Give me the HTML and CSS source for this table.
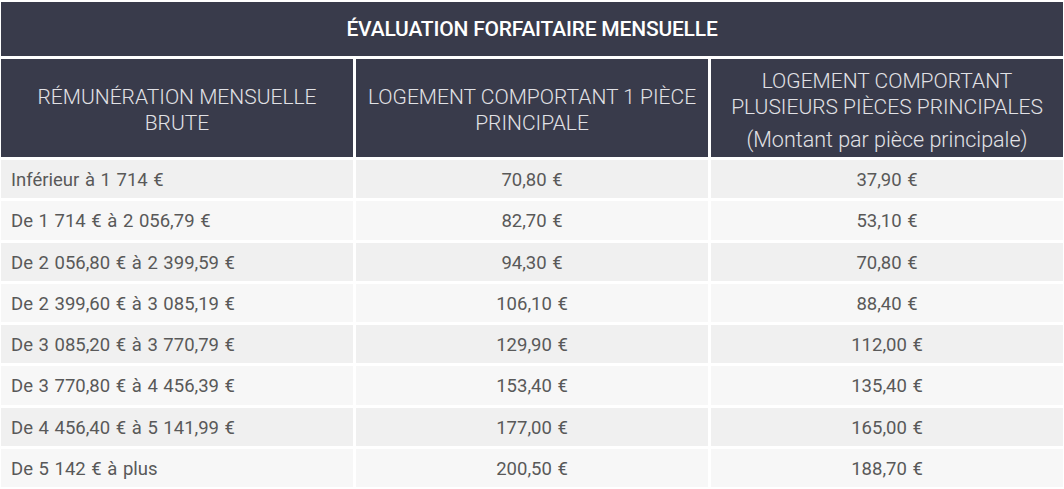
FILE: index.html
```html
<!DOCTYPE html>
<html lang="fr">
<head>
<meta charset="utf-8">
<title>Évaluation forfaitaire mensuelle</title>
<link rel="stylesheet" href="styles.css">
</head>
<body>
<div class="table">
  <div class="title">ÉVALUATION FORFAITAIRE MENSUELLE</div>
  <div class="head">RÉMUNÉRATION MENSUELLE<br>BRUTE</div>
  <div class="head">LOGEMENT COMPORTANT 1 PIÈCE<br>PRINCIPALE</div>
  <div class="head head-3">
    <span>LOGEMENT COMPORTANT<br>PLUSIEURS PIÈCES PRINCIPALES</span>
    <span class="note">(Montant par pièce principale)</span>
  </div>

  <div class="cell c1 odd">Inférieur à 1 714 €</div>
  <div class="cell odd">70,80 €</div>
  <div class="cell odd">37,90 €</div>

  <div class="cell c1 even">De 1 714 € à 2 056,79 €</div>
  <div class="cell even">82,70 €</div>
  <div class="cell even">53,10 €</div>

  <div class="cell c1 odd">De 2 056,80 € à 2 399,59 €</div>
  <div class="cell odd">94,30 €</div>
  <div class="cell odd">70,80 €</div>

  <div class="cell c1 even">De 2 399,60 € à 3 085,19 €</div>
  <div class="cell even">106,10 €</div>
  <div class="cell even">88,40 €</div>

  <div class="cell c1 odd">De 3 085,20 € à 3 770,79 €</div>
  <div class="cell odd">129,90 €</div>
  <div class="cell odd">112,00 €</div>

  <div class="cell c1 even">De 3 770,80 € à 4 456,39 €</div>
  <div class="cell even">153,40 €</div>
  <div class="cell even">135,40 €</div>

  <div class="cell c1 odd">De 4 456,40 € à 5 141,99 €</div>
  <div class="cell odd">177,00 €</div>
  <div class="cell odd">165,00 €</div>

  <div class="cell c1 even">De 5 142 € à plus</div>
  <div class="cell even">200,50 €</div>
  <div class="cell even">188,70 €</div>
</div>
</body>
</html>
```

FILE: styles.css
```css
html, body {
  margin: 0;
  padding: 0;
  background: #ffffff;
}

body {
  font-family: Roboto, "Liberation Sans", sans-serif;
}

.table {
  width: 1064px;
  box-sizing: border-box;
  padding: 2px 1px 2px 1px;
  display: grid;
  grid-template-columns: 352px 352px 352px;
  grid-template-rows: 54px 98px repeat(8, 38.25px);
  column-gap: 3px;
  row-gap: 3px;
  background: #ffffff;
}

.title {
  grid-column: 1 / 4;
  background: #393b4b;
  color: #ffffff;
  font-weight: 500;
  font-size: 21px;
  letter-spacing: -0.2px;
  display: flex;
  align-items: center;
  justify-content: center;
}

.head {
  background: #393b4b;
  color: #e2e2e6;
  font-weight: 300;
  font-size: 21px;
  line-height: 26px;
  text-align: center;
  display: flex;
  flex-direction: column;
  align-items: center;
  justify-content: center;
  padding-top: 3px;
  box-sizing: border-box;
}

.head-3 {
  padding-top: 4px;
}

.head-3 .note {
  margin-top: 7px;
  font-size: 21.5px;
}

.cell {
  color: #595959;
  font-size: 18.5px;
  word-spacing: 1px;
  display: flex;
  align-items: center;
  justify-content: center;
  padding-top: 2px;
  box-sizing: border-box;
}

.cell.c1 {
  justify-content: flex-start;
  padding-left: 10px;
}

.odd {
  background: #f0f0f0;
}

.even {
  background: #f7f7f7;
}
```
